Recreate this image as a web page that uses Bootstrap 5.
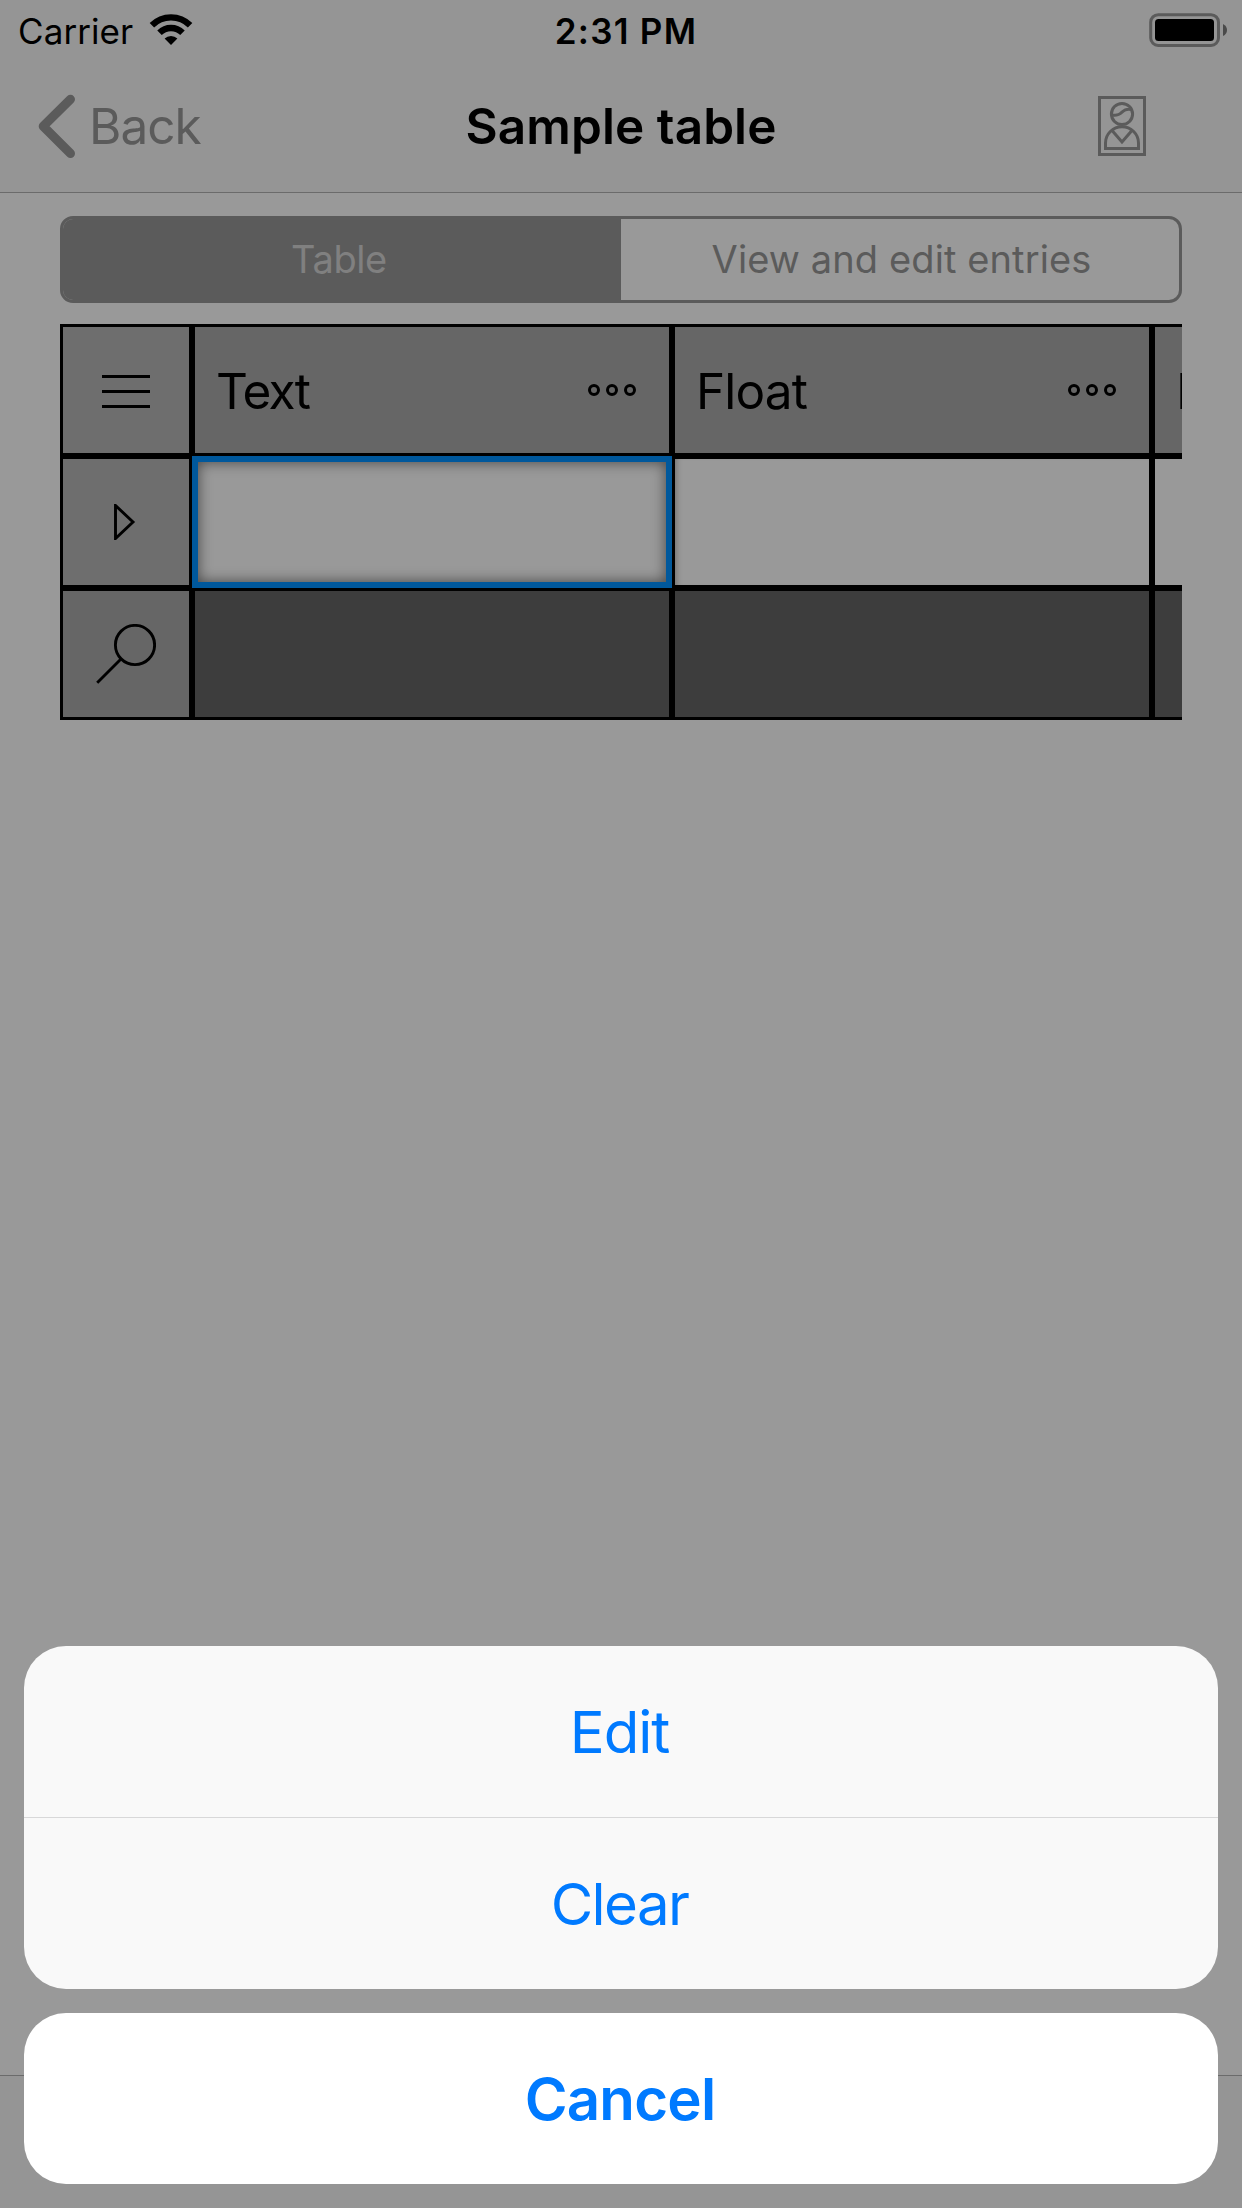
<!DOCTYPE html>
<html lang="en">
<head>
<meta charset="utf-8">
<meta name="viewport" content="width=device-width, initial-scale=1">
<title>Sample table</title>
<link href="https://cdn.jsdelivr.net/npm/bootstrap@5.3.0/dist/css/bootstrap.min.css" rel="stylesheet">
<style>
  body { font-family: Inter, "Liberation Sans", sans-serif; background: #999; color: #000; }
  svg { display: block; flex: none; }
  .screen { width: 1242px; height: 2208px; background: #999; }
  .top-area { height: 193px; background: #959595; border-bottom: 1px solid #6b6b6b; }
  .status-line { height: 60px; padding: 2px 14px 0 18px; font-size: 35px; line-height: 58px; }
  .status-line .side { flex: 1 1 0; }
  .carrier { letter-spacing: .08px; margin-right: 16px; }
  .wifi { margin-top: 11px; }
  .battery { margin-top: 10px; }
  .clock { font-weight: 600; letter-spacing: 1.25px; padding-left: 6px; }
  .title-line { height: 132px; padding: 0 96px 0 38px; font-size: 49.5px; line-height: 132px; }
  .title-line .side { flex: 1 1 0; }
  .back-link { color: #5b5b5b; letter-spacing: -.95px; gap: 13px; text-decoration: none; }
  .page-title { font-size: 49.5px; line-height: 132px; font-weight: 600; letter-spacing: .08px; margin: 0 -58px 0 0; }
  .main-area { padding: 23px 60px 0; }
  .segments { height: 87px; border: 3px solid #5b5b5b; border-radius: 13px; overflow: hidden; font-size: 38px; }
  .segments .btn { flex: none; width: 50%; padding: 0 0 0 3px; border: 0; border-radius: 0; font-size: 38px; line-height: 81px; color: #5b5b5b; letter-spacing: .11px; }
  .segments .btn.active { padding: 0 6px 0 0; background: #5b5b5b; color: #808080; letter-spacing: -.39px; }
  .sheet-grid { margin-top: 21px; overflow: hidden; }
  .grid-line { height: 132px; }
  .cell { flex: none; width: 480px; height: 132px; border: 3px solid #000; background: #999; padding: 0 21px; }
  .cell.lead-cell { width: 132px; padding: 0; background: #6e6e6e; }
  .cell.find-cell { background: #666; }
  .cell.head-cell { padding-right: 33px; background: #666; font-size: 49.5px; line-height: 124px; letter-spacing: -.87px; }
  .head-cell span { padding-top: 2px; }
  .head-cell .tight { letter-spacing: -1.7px; }
  .cell.dark-cell { background: #3d3d3d; }
  .cell.selected { border: 6px solid #00589c; box-shadow: inset 0 0 14px rgba(0,0,0,.55); }
  .cell.beside { box-shadow: inset 6px 0 6px -5px rgba(0,0,0,.3); }
  .tab-line { height: 133px; background: #959595; border-top: 1px solid #6b6b6b; }
  .action-sheet { left: 24px; right: 24px; bottom: 24px; gap: 24px; }
  .action-block { border-radius: 42px; overflow: hidden; background: #f9f9f9; }
  .action-block .btn { height: 171px; padding: 1px 3px 0 0; border: 0; border-radius: 0; font-size: 58.2px; line-height: 171px; color: #007aff; letter-spacing: -1.07px; }
  .action-block .btn + .btn { height: 172px; border-top: 1px solid #d8d8d9; letter-spacing: -1.62px; }
  .action-block.cancel-block { background: #fff; }
  .cancel-block .btn { font-weight: 600; letter-spacing: -.78px; padding-right: 2px; }
</style>
</head>
<body>
<div class="screen position-relative overflow-hidden d-flex flex-column">
  <header class="top-area">
    <div class="status-line d-flex">
      <div class="side d-flex align-items-start">
        <span class="carrier">Carrier</span>
        <svg width="44" height="34" viewBox="149 13 44 34" class="wifi">
          <g fill="none" stroke="#000" stroke-width="6.3">
            <path d="M151.9 25.200a27 27 0 0 1 38.2 0"/>
            <path d="M159.5 32.800a16.200 16.200 0 0 1 23 0"/>
          </g>
          <path d="M164.600 38.600a9 9 0 0 1 12.800 0L171 45z"/>
        </svg>
      </div>
      <span class="clock">2:31 PM</span>
      <div class="side d-flex justify-content-end align-items-start">
        <svg width="80" height="36" viewBox="1148 12 80 36" class="battery">
          <rect x="1150.700" y="14.700" width="67.800" height="30.800" rx="7.500" fill="none" stroke="#5b5b5b" stroke-width="3"/>
          <rect x="1155" y="19" width="59" height="22" rx="3.500"/>
          <path d="M1223 24q4 2 4 6t-4 6z" fill="#4a4a4a"/>
        </svg>
      </div>
    </div>
    <nav class="title-line d-flex align-items-center" aria-label="Page">
      <div class="side d-flex">
        <a class="back-link d-flex align-items-center" href="#">
          <svg width="38" height="66" viewBox="38 93 38 66"><path d="M70.500 99.300L43.200 126.300l27.300 27.200" fill="none" stroke="#5b5b5b" stroke-width="9" stroke-linecap="round" stroke-linejoin="round"/></svg>
          <span>Back</span>
        </a>
      </div>
      <h1 class="page-title">Sample table</h1>
      <div class="side d-flex justify-content-end">
        <svg width="48" height="60" viewBox="0 0 48 60" fill="none" stroke="#5b5b5b" stroke-width="3">
          <rect x="1.500" y="1.500" width="45" height="57"/>
          <circle cx="24" cy="18" r="10.600"/>
          <path d="M14 19c12 2 8-7.500 19.500-5.500"/>
          <path d="M7.500 52.500V47a16.500 16.200 0 0 1 33 0v5.500z"/>
          <path d="M14.500 35L24 46l9.500-11"/>
        </svg>
      </div>
    </nav>
  </header>

  <main class="main-area flex-grow-1">
    <div class="segments d-flex" role="group">
      <button type="button" class="btn active">Table</button>
      <button type="button" class="btn">View and edit entries</button>
    </div>

    <div class="sheet-grid">
      <div class="grid-line d-flex">
        <div class="cell lead-cell d-flex align-items-center justify-content-center">
          <svg width="48" height="36" viewBox="0 -3 48 36"><path d="M0 1.500h48M0 16.500h48M0 31.500h48" stroke="#000" stroke-width="3"/></svg>
        </div>
        <div class="cell head-cell d-flex align-items-center justify-content-between">
          <span class="tight">Text</span>
          <svg width="48" height="12" viewBox="0 0 48 12" fill="none" stroke="#000" stroke-width="3"><circle cx="6" cy="6" r="4.500"/><circle cx="24" cy="6" r="4.500"/><circle cx="42" cy="6" r="4.500"/></svg>
        </div>
        <div class="cell head-cell d-flex align-items-center justify-content-between">
          <span>Float</span>
          <svg width="48" height="12" viewBox="0 0 48 12" fill="none" stroke="#000" stroke-width="3"><circle cx="6" cy="6" r="4.500"/><circle cx="24" cy="6" r="4.500"/><circle cx="42" cy="6" r="4.500"/></svg>
        </div>
        <div class="cell head-cell d-flex align-items-center"><span>I</span></div>
      </div>
      <div class="grid-line d-flex">
        <div class="cell lead-cell d-flex align-items-center justify-content-center">
          <svg width="24" height="36" viewBox="114 504 24 36"><path d="M115.500 505.500v33L133 522z" fill="none" stroke="#000" stroke-width="2.900"/></svg>
        </div>
        <div class="cell selected"></div>
        <div class="cell beside"></div>
        <div class="cell"></div>
      </div>
      <div class="grid-line d-flex">
        <div class="cell lead-cell find-cell d-flex align-items-center justify-content-center">
          <svg width="60" height="60" viewBox="96 624 60 60" fill="none" stroke="#000" stroke-width="2.900"><circle cx="135" cy="645" r="19.600"/><path d="M121.200 658.800L97.200 682.800"/></svg>
        </div>
        <div class="cell dark-cell"></div>
        <div class="cell dark-cell"></div>
        <div class="cell dark-cell"></div>
      </div>
    </div>
  </main>

  <footer class="tab-line"></footer>

  <div class="action-sheet position-absolute d-flex flex-column">
    <div class="action-block d-flex flex-column">
      <button type="button" class="btn">Edit</button>
      <button type="button" class="btn">Clear</button>
    </div>
    <div class="action-block cancel-block d-flex flex-column">
      <button type="button" class="btn">Cancel</button>
    </div>
  </div>
</div>
<script src="https://cdn.jsdelivr.net/npm/bootstrap@5.3.0/dist/js/bootstrap.bundle.min.js"></script>
</body>
</html>
